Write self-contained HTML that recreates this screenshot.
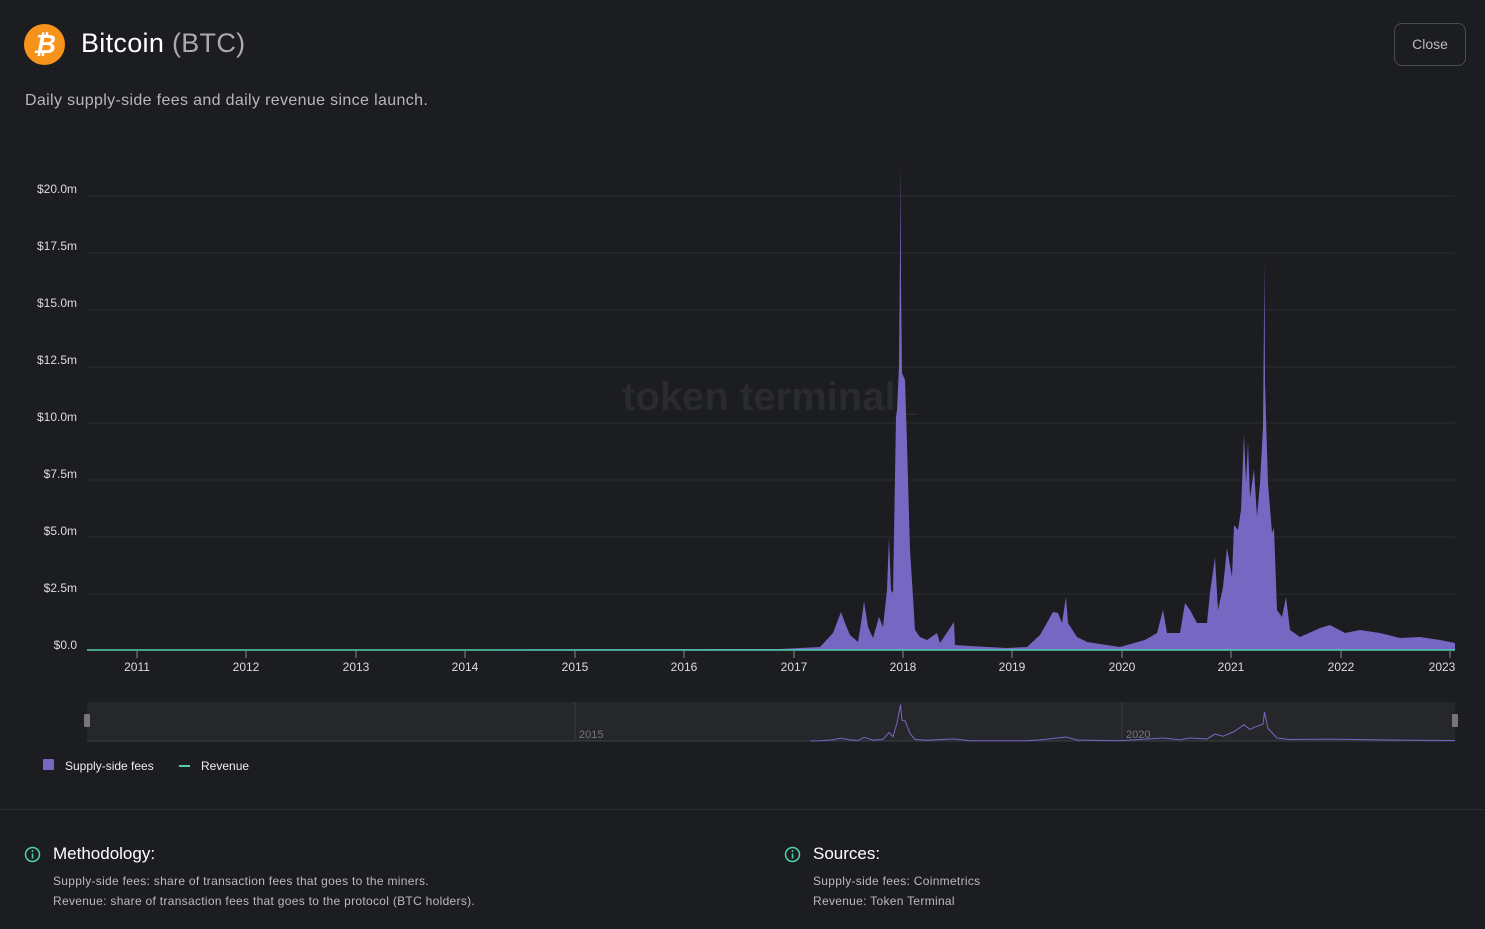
<!DOCTYPE html>
<html><head><meta charset="utf-8"><style>
*{margin:0;padding:0;box-sizing:border-box}
body{width:1485px;height:929px;background:#1c1d20;font-family:"Liberation Sans",sans-serif;color:#e8e8e8;position:relative;overflow:hidden}
.abs{position:absolute}
</style></head><body>
<div class="abs" style="left:24px;top:24px;width:41px;height:41px;border-radius:50%;background:#f7931a;color:#fff;font-weight:bold;font-size:26px;text-align:center;line-height:41px;font-style:italic">₿</div>
<div class="abs" style="left:81px;top:28px;font-size:27px;color:#fff;letter-spacing:0.3px">Bitcoin <span style="color:#aaa">(BTC)</span></div>
<div class="abs" style="left:1394px;top:23px;width:72px;height:43px;border:1px solid #4a4b50;border-radius:8px;color:#bbb;font-size:14px;text-align:center;line-height:41px">Close</div>
<div class="abs" style="left:25px;top:92px;font-size:16px;color:#b8b8b8;letter-spacing:0.35px">Daily supply-side fees and daily revenue since launch.</div>

<svg class="abs" style="left:0;top:0" width="1485" height="800">
<g stroke="#2c2d31" stroke-width="1">
<line x1="87" x2="1455" y1="196" y2="196"/><line x1="87" x2="1455" y1="253" y2="253"/><line x1="87" x2="1455" y1="310" y2="310"/><line x1="87" x2="1455" y1="367" y2="367"/><line x1="87" x2="1455" y1="423" y2="423"/><line x1="87" x2="1455" y1="480" y2="480"/><line x1="87" x2="1455" y1="537" y2="537"/><line x1="87" x2="1455" y1="594" y2="594"/>
</g>
<g font-size="12" fill="#ddd" text-anchor="end">
<text x="77" y="193">$20.0m</text><text x="77" y="250">$17.5m</text><text x="77" y="307">$15.0m</text><text x="77" y="364">$12.5m</text><text x="77" y="421">$10.0m</text><text x="77" y="478">$7.5m</text><text x="77" y="535">$5.0m</text><text x="77" y="592">$2.5m</text><text x="77" y="649">$0.0</text>
</g>
<text x="770" y="410" font-size="40" font-weight="bold" fill="#2a2b2f" text-anchor="middle">token terminal_</text>
<path fill="#7567c2" d="M87,650 L780,649 L800,648 L820,647 L833,633 L841,612 L845,623 L850,635 L858,642 L862,617 L864,601 L868,627 L873,638 L879,617 L883,627 L887,590 L889,537 L891,590 L893,593 L896,417 L897,410 L899,367 L900,250 L900.5,165 L901,283 L902,373 L905,380 L907,443 L908,480 L910,550 L913,597 L915,630 L920,637 L927,640 L937,633 L940,643 L954,622 L955,645 L970,646 L1007,648 L1027,647 L1040,635 L1053,612 L1058,613 L1062,623 L1066,597 L1068,623 L1077,637 L1087,642 L1120,647 L1145,640 L1157,633 L1163,610 L1167,633 L1180,633 L1185,603 L1190,610 L1197,623 L1207,623 L1210,593 L1215,557 L1218,610 L1223,587 L1227,548 L1232,577 L1234,525 L1238,530 L1241,510 L1244,434 L1246,483 L1248,442 L1250,498 L1254,469 L1257,517 L1260,483 L1263,427 L1264.5,263 L1265,383 L1268,483 L1272,533 L1274,528 L1277,610 L1282,617 L1286,597 L1290,630 L1300,637 L1320,628 L1330,625 L1345,633 L1360,630 L1380,633 L1400,638 L1420,637 L1440,640 L1455,643 L1455,650 Z"/>
<line x1="87" x2="1455" y1="650" y2="650" stroke="#4fd1b0" stroke-width="1.5"/>
<g stroke="#888" stroke-width="1">
<line x1="137" x2="137" y1="651" y2="658"/><line x1="246" x2="246" y1="651" y2="658"/><line x1="356" x2="356" y1="651" y2="658"/><line x1="465" x2="465" y1="651" y2="658"/><line x1="575" x2="575" y1="651" y2="658"/><line x1="684" x2="684" y1="651" y2="658"/><line x1="794" x2="794" y1="651" y2="658"/><line x1="903" x2="903" y1="651" y2="658"/><line x1="1012" x2="1012" y1="651" y2="658"/><line x1="1122" x2="1122" y1="651" y2="658"/><line x1="1231" x2="1231" y1="651" y2="658"/><line x1="1341" x2="1341" y1="651" y2="658"/><line x1="1450" x2="1450" y1="651" y2="658"/>
</g>
<g font-size="12" fill="#ddd" text-anchor="middle">
<text x="137" y="671">2011</text><text x="246" y="671">2012</text><text x="356" y="671">2013</text><text x="465" y="671">2014</text><text x="575" y="671">2015</text><text x="684" y="671">2016</text><text x="794" y="671">2017</text><text x="903" y="671">2018</text><text x="1012" y="671">2019</text><text x="1122" y="671">2020</text><text x="1231" y="671">2021</text><text x="1341" y="671">2022</text><text x="1442" y="671">2023</text>
</g>
<rect x="87" y="702" width="1368" height="39" fill="#26272b"/>
<line x1="87" x2="1455" y1="741" y2="741" stroke="#3a4045"/>
<line x1="575" x2="575" y1="702" y2="741" stroke="#3a3b40"/>
<line x1="1122" x2="1122" y1="702" y2="741" stroke="#3a3b40"/>
<text x="579" y="738" font-size="11" fill="#777">2015</text>
<text x="1126" y="738" font-size="11" fill="#777">2020</text>
<path fill="none" stroke="#7567c2" stroke-width="1" vector-effect="non-scaling-stroke" transform="translate(0,692.25) scale(1,0.075)" d="M810,650 L820,647 L833,633 L841,612 L850,635 L858,642 L864,601 L873,638 L883,627 L889,537 L893,593 L897,410 L900.5,165 L902,373 L905,380 L910,550 L915,630 L927,640 L954,622 L970,646 L1027,647 L1040,635 L1066,597 L1077,637 L1120,647 L1163,610 L1180,633 L1190,610 L1207,623 L1215,557 L1223,587 L1234,525 L1244,434 L1250,498 L1254,469 L1263,427 L1264.5,263 L1268,483 L1277,610 L1290,630 L1330,625 L1400,638 L1455,643"/>
<rect x="84" y="714" width="6" height="13" rx="1" fill="#777"/>
<rect x="1452" y="714" width="6" height="13" rx="1" fill="#777"/>
</svg>

<div class="abs" style="left:43px;top:759px;width:11px;height:11px;background:#7567c2;border-radius:1px"></div>
<div class="abs" style="left:65px;top:759px;font-size:12px;color:#eee">Supply-side fees</div>
<div class="abs" style="left:179px;top:765px;width:11px;height:2px;background:#4fd1b0"></div>
<div class="abs" style="left:201px;top:759px;font-size:12px;color:#eee">Revenue</div>

<div class="abs" style="left:0;top:809px;width:1485px;height:1px;background:#2c2d31"></div>

<svg class="abs" style="left:24px;top:846px" width="17" height="17"><circle cx="8.5" cy="8.5" r="7" fill="none" stroke="#4fd1b0" stroke-width="1.5"/><line x1="8.5" y1="7.5" x2="8.5" y2="12.5" stroke="#4fd1b0" stroke-width="1.5"/><circle cx="8.5" cy="5" r="1" fill="#4fd1b0"/></svg>
<div class="abs" style="left:53px;top:844px;font-size:17px;color:#fff">Methodology:</div>
<div class="abs" style="left:53px;top:871px;font-size:12px;color:#bbb;line-height:20px;letter-spacing:0.3px">Supply-side fees: share of transaction fees that goes to the miners.<br>Revenue: share of transaction fees that goes to the protocol (BTC holders).</div>

<svg class="abs" style="left:784px;top:846px" width="17" height="17"><circle cx="8.5" cy="8.5" r="7" fill="none" stroke="#4fd1b0" stroke-width="1.5"/><line x1="8.5" y1="7.5" x2="8.5" y2="12.5" stroke="#4fd1b0" stroke-width="1.5"/><circle cx="8.5" cy="5" r="1" fill="#4fd1b0"/></svg>
<div class="abs" style="left:813px;top:844px;font-size:17px;color:#fff">Sources:</div>
<div class="abs" style="left:813px;top:871px;font-size:12px;color:#bbb;line-height:20px;letter-spacing:0.3px">Supply-side fees: Coinmetrics<br>Revenue: Token Terminal</div>
</body></html>
